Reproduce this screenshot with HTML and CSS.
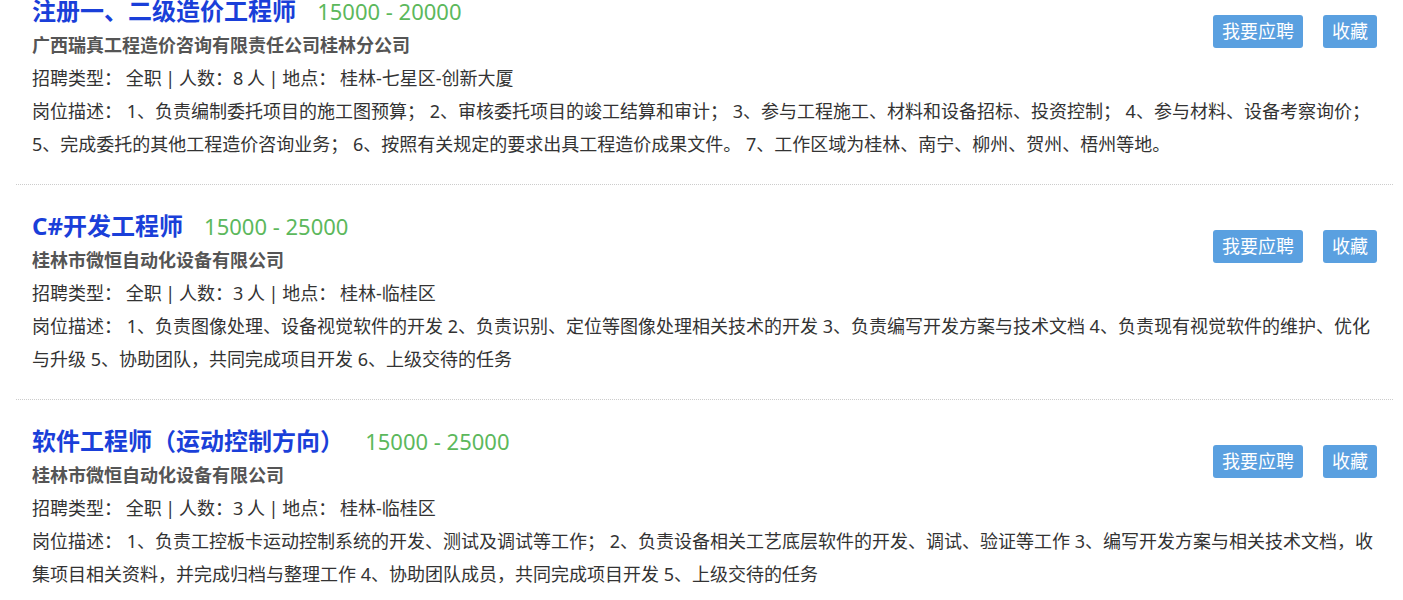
FILE: index.html
```html
<!DOCTYPE html>
<html lang="zh-CN">
<head>
  <meta charset="UTF-8">
  <title>职位列表</title>
  <link rel="stylesheet" href="styles.css">
</head>
<body>
  <div class="job-list">

    <!-- 职位 1 -->
    <div class="job-item">
      <div class="job-actions">
        <button class="btn">我要应聘</button>
        <button class="btn">收藏</button>
      </div>
      <div class="job-title">
        <a href="#">注册一、二级造价工程师</a>
        <span class="salary">15000 - 20000</span>
      </div>
      <div class="company">广西瑞真工程造价咨询有限责任公司桂林分公司</div>
      <div class="info">招聘类型： 全职 | 人数：8 人 | 地点： 桂林-七星区-创新大厦</div>
      <div class="desc">岗位描述： 1、负责编制委托项目的施工图预算； 2、审核委托项目的竣工结算和审计； 3、参与工程施工、材料和设备招标、投资控制； 4、参与材料、设备考察询价； 5、完成委托的其他工程造价咨询业务； 6、按照有关规定的要求出具工程造价成果文件。 7、工作区域为桂林、南宁、柳州、贺州、梧州等地。</div>
    </div>

    <!-- 职位 2 -->
    <div class="job-item">
      <div class="job-actions">
        <button class="btn">我要应聘</button>
        <button class="btn">收藏</button>
      </div>
      <div class="job-title">
        <a href="#">C#开发工程师</a>
        <span class="salary">15000 - 25000</span>
      </div>
      <div class="company">桂林市微恒自动化设备有限公司</div>
      <div class="info">招聘类型： 全职 | 人数：3 人 | 地点： 桂林-临桂区</div>
      <div class="desc">岗位描述： 1、负责图像处理、设备视觉软件的开发 2、负责识别、定位等图像处理相关技术的开发 3、负责编写开发方案与技术文档 4、负责现有视觉软件的维护、优化与升级 5、协助团队，共同完成项目开发 6、上级交待的任务</div>
    </div>

    <!-- 职位 3 -->
    <div class="job-item">
      <div class="job-actions">
        <button class="btn">我要应聘</button>
        <button class="btn">收藏</button>
      </div>
      <div class="job-title">
        <a href="#">软件工程师（运动控制方向）</a>
        <span class="salary">15000 - 25000</span>
      </div>
      <div class="company">桂林市微恒自动化设备有限公司</div>
      <div class="info">招聘类型： 全职 | 人数：3 人 | 地点： 桂林-临桂区</div>
      <div class="desc">岗位描述： 1、负责工控板卡运动控制系统的开发、测试及调试等工作； 2、负责设备相关工艺底层软件的开发、调试、验证等工作 3、编写开发方案与相关技术文档，收集项目相关资料，并完成归档与整理工作 4、协助团队成员，共同完成项目开发 5、上级交待的任务</div>
    </div>

  </div>
</body>
</html>
```

FILE: styles.css
```css
body {
  margin: 0;
  font-family: "Noto Sans", "Noto Sans CJK SC", sans-serif;
  background: #fff;
  color: #333;
}
.job-list {
  margin: -30px 10px 0 16px;
}
.job-item {
  padding: 23px 16px;
  border-bottom: 1px dotted #ccc;
}
.job-actions {
  float: right;
  display: flex;
  gap: 20px;
  margin-top: 22px;
}
.btn {
  height: 33px;
  padding: 0 9px;
  border: none;
  border-radius: 3px;
  background: #5aa0e0;
  color: #fff;
  font-family: inherit;
  font-size: 18px;
  line-height: 33px;
  cursor: pointer;
}
.job-title {
  height: 36px;
  line-height: 36px;
}
.job-title a {
  color: #1a3fd9;
  font-size: 24px;
  font-weight: bold;
  text-decoration: none;
}
.salary {
  margin-left: 17px;
  color: #5cb85c;
  font-size: 22px;
}
.company {
  font-size: 18px;
  font-weight: bold;
  color: #555;
  line-height: 33px;
}
.info, .desc {
  font-size: 18px;
  line-height: 33px;
}
.info {
  word-spacing: -1px;
}
```
